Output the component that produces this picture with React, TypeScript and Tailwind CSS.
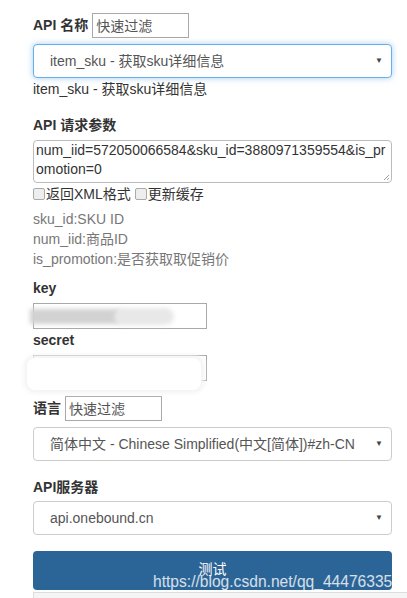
const FONT = "font-['Liberation_Sans','Noto_Sans_CJK_SC',sans-serif]"

function Filter() {
  return (
    <input
      readOnly
      placeholder="快速过滤"
      className="h-[25px] w-[97px] border border-[#a9a9a9] bg-white px-[3px] text-[14px] text-[#333] placeholder:text-[#555] outline-none"
    />
  )
}

function Select({ value, focused }: { value: string; focused?: boolean }) {
  return (
    <div
      className={
        focused
          ? 'flex h-[34px] items-center justify-between rounded-[4px] border border-[#66afe9] bg-white pl-[16px] pr-[8px] text-[14px] text-[#555] shadow-[0_0_6px_rgba(102,175,233,0.6)]'
          : 'flex h-[34px] items-center justify-between rounded-[4px] border border-[#ccc] bg-white pl-[16px] pr-[8px] text-[14px] text-[#555]'
      }
    >
      <span>{value}</span>
      <span className="text-[8px] text-[#444]">▼</span>
    </div>
  )
}

export default function App() {
  return (
    <div className={`${FONT} relative h-[598px] w-[407px] overflow-hidden bg-white text-[14px] text-[#333]`}>
      <div className="ml-[33px] w-[359px] pt-[13px]">
        <div className="flex items-center gap-[4px]">
          <label className="font-bold">API 名称</label>
          <Filter />
        </div>

        <div className="mt-[6px]">
          <Select value="item_sku - 获取sku详细信息" focused />
        </div>
        <p className="mt-[1px] leading-[20px]">item_sku - 获取sku详细信息</p>

        <p className="mt-[16px] font-bold leading-[20px]">API 请求参数</p>
        <div className="relative mt-[5px] h-[43px] rounded-[4px] border border-[#bbb] px-[2px] leading-[19px] break-all">
          num_iid=572050066584&amp;sku_id=3880971359554&amp;is_promotion=0
          <svg className="absolute bottom-[1px] right-[1px]" width="7" height="7" viewBox="0 0 7 7">
            <path d="M1 6 L6 1 M4 6 L6 4" stroke="#888" strokeWidth="0.8" />
          </svg>
        </div>

        <div className="mt-[1px] flex items-center leading-[20px]">
          <span className="mr-[1px] inline-block h-[12px] w-[12px] rounded-[2px] border border-[#aaa] bg-[#eee]" />
          <span>返回XML格式</span>
          <span className="ml-[4px] mr-[1px] inline-block h-[12px] w-[12px] rounded-[2px] border border-[#aaa] bg-[#eee]" />
          <span>更新缓存</span>
        </div>

        <div className="mt-[5px] leading-[20px] text-[#777]">
          <p>sku_id:SKU ID</p>
          <p>num_iid:商品ID</p>
          <p>is_promotion:是否获取取促销价</p>
        </div>

        <p className="mt-[9px] font-bold leading-[20px]">key</p>
        <div className="relative mt-[5px] h-[26px] w-[174px] border border-[#a9a9a9]">
          <div className="absolute left-[-4px] top-[5px] h-[15px] w-[90px] bg-[#d2d2d2] blur-[2px]" />
          <div className="absolute left-[80px] top-[4px] h-[17px] w-[60px] rounded-full bg-[#e8e8e8] blur-[2px]" />
        </div>

        <p className="mt-[1px] font-bold leading-[20px]">secret</p>
        <div className="relative mt-[5px] h-[26px] w-[174px] border border-[#a9a9a9]">
          <div className="absolute left-[-7px] top-[2px] h-[32px] w-[174px] rounded-[8px] bg-white shadow-[0_0_5px_3px_#f3f3f3]" />
        </div>

        <div className="mt-[15px] flex items-center gap-[4px]">
          <label className="font-bold">语言</label>
          <Filter />
        </div>

        <div className="mt-[6px]">
          <Select value="简体中文 - Chinese Simplified(中文[简体])#zh-CN" />
        </div>

        <p className="mt-[16px] font-bold leading-[20px]">API服务器</p>
        <div className="mt-[4px]">
          <Select value="api.onebound.cn" />
        </div>

        <button className="relative mt-[16px] flex h-[39px] w-full items-start justify-center rounded-[4px] bg-[#2b6496] pt-[8px] text-[14px] text-white">
          测试
        </button>
      </div>

      <div className="ml-[33px] mt-[2px] h-[20px] border-t border-l border-[#ddd] bg-[#f5f5f5]" />

      <span className="pointer-events-none absolute left-[153px] top-[570px] text-[15.6px] text-white/80">
        https://blog.csdn.net/qq_44476335
      </span>
    </div>
  )
}
